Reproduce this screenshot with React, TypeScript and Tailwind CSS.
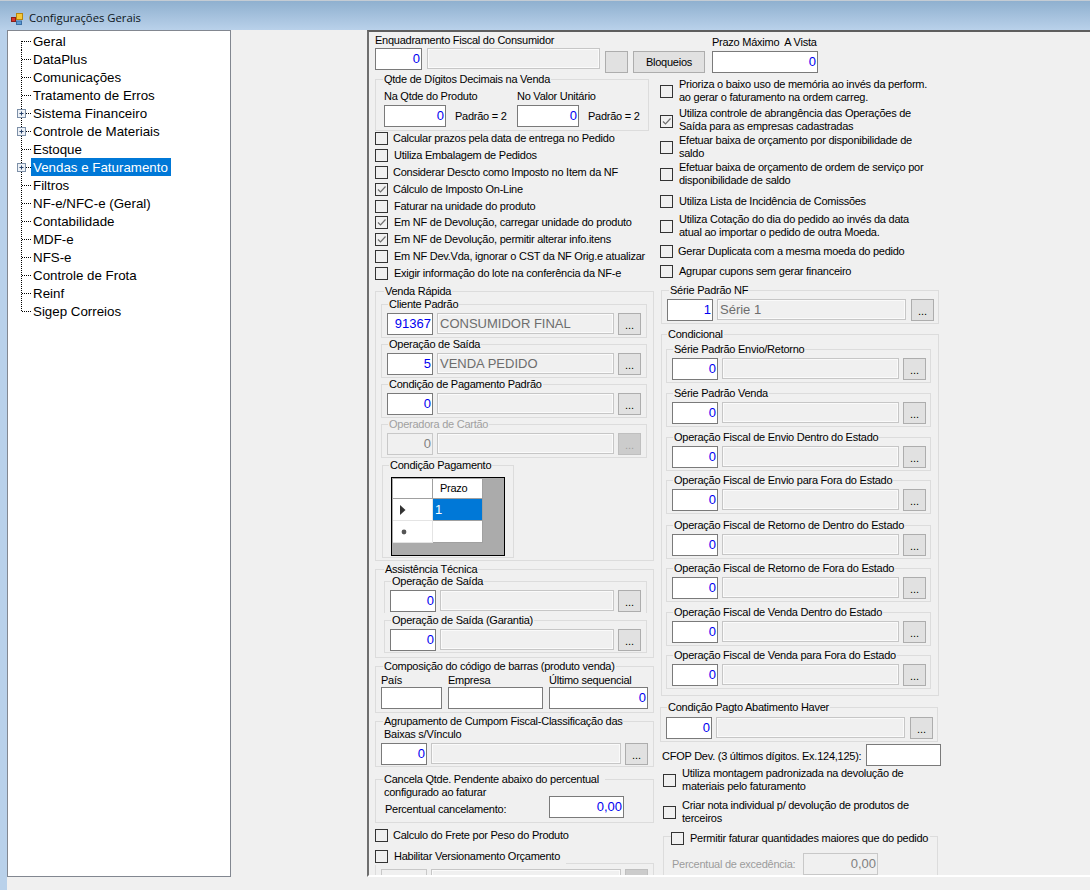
import React from "react";

type Kids = { children?: React.ReactNode };

const treeItems: [string, boolean][] = [
  ["Geral", false], ["DataPlus", false], ["Comunicações", false], ["Tratamento de Erros", false],
  ["Sistema Financeiro", true], ["Controle de Materiais", true], ["Estoque", false], ["Vendas e Faturamento", true],
  ["Filtros", false], ["NF-e/NFC-e (Geral)", false], ["Contabilidade", false], ["MDF-e", false],
  ["NFS-e", false], ["Controle de Frota", false], ["Reinf", false], ["Sigep Correios", false],
];

function TreeLines({ plus, first, last }: { plus: boolean; first: boolean; last: boolean }) {
  return (
    <svg width="23" height="18" className="shrink-0">
      <line x1="13.5" x2="13.5" y1={first ? 9 : 0} y2={last ? 9 : 18} stroke="#000" strokeDasharray="1 1" />
      <line x1="14" x2="23" y1="9.5" y2="9.5" stroke="#000" strokeDasharray="1 1" />
      {plus && (
        <g>
          <rect x="9.5" y="5.5" width="8" height="8" fill="#eef2f7" stroke="#7d90a8" />
          <path d="M11.5 9.5h4M13.5 7.5v4" stroke="#27426b" />
        </g>
      )}
    </svg>
  );
}

function Tree() {
  return (
    <div className="w-[224px] h-[847px] shrink-0 bg-white border border-[#828790] pt-[1px] text-[13.33px] tracking-normal text-black">
      {treeItems.map(([t, plus], i) => {
        const sel = t === "Vendas e Faturamento";
        return (
          <div key={t} className="flex items-center h-[18px]">
            <TreeLines plus={plus} first={i === 0} last={i === treeItems.length - 1} />
            <span className={sel ? "h-[18px] leading-[20px] pl-[2px] pr-[3px] bg-[#0078d7] text-white" : "h-[18px] leading-[20px] pl-[2px]"}>{t}</span>
          </div>
        );
      })}
    </div>
  );
}

function Num({ w, v, dis, cls }: { w: string; v?: string; dis?: boolean; cls?: string }) {
  return (
    <div
      className={`${w} ${cls ?? ""} h-[22px] shrink-0 border text-right pr-[1px] text-[13px] tracking-normal leading-[20px] ${
        dis ? "bg-[#f0f0f0] border-[#c8c8c8] text-[#808080]" : "bg-white border-[#7a7a7a] text-[#0000f0]"
      }`}
    >
      {v}
    </div>
  );
}

function Gray({ w, v }: { w: string; v?: string }) {
  return (
    <div className={`${w} h-[21px] shrink-0 border border-[#c6c6c6] shadow-[inset_0_0_0_1px_#fafafa] bg-[#f0f0f0] pl-[2px] text-[13px] tracking-normal leading-[20px] text-[#6d6d6d]`}>
      {v}
    </div>
  );
}

function Dots({ dis, cls }: { dis?: boolean; cls?: string }) {
  return (
    <div
      className={`w-[23px] h-[22px] shrink-0 border text-center text-[11px] tracking-normal leading-[22px] ${cls ?? ""} ${
        dis ? "bg-[#cccccc] border-[#bfbfbf] text-[#a0a0a0]" : "bg-[#e1e1e1] border-[#adadad] text-black"
      }`}
    >
      ...
    </div>
  );
}

function Lookup({ numW = "w-[46px]", grayW, v, t, dis, gap2 = "ml-[4px]" }: { numW?: string; grayW: string; v: string; t?: string; dis?: boolean; gap2?: string }) {
  return (
    <div className="flex items-start">
      <Num w={numW} v={v} dis={dis} />
      <div className="ml-[4px]"><Gray w={grayW} v={t} /></div>
      <Dots dis={dis} cls={gap2} />
    </div>
  );
}

function Group({ legend, cls, lcls, legendColor, children }: Kids & { legend?: React.ReactNode; cls: string; lcls?: string; legendColor?: string }) {
  return (
    <div className={`border border-[#dcdcdc] ${cls}`}>
      <div className={`-mt-[7px] h-[13px] leading-[13px] w-fit bg-[#f0f0f0] px-[1px] whitespace-pre ${lcls ?? "ml-[7px]"} ${legendColor ?? ""}`}>{legend}</div>
      {children}
    </div>
  );
}

function Box({ on }: { on?: boolean }) {
  return (
    <span className="w-[13px] h-[13px] shrink-0 border border-[#333333] block">
      {on && (
        <svg width="11" height="11" className="block">
          <path d="M2 5.5 4.5 8 9.5 2.5" fill="none" stroke="#6e6e6e" strokeWidth="1.2" />
        </svg>
      )}
    </span>
  );
}

function Check({ on, lines, h, gap = "gap-[6px]", cls, tcls }: { on?: boolean; lines: string[]; h: string; gap?: string; cls?: string; tcls?: string }) {
  return (
    <div className={`flex items-center ${gap} ${h} ${cls ?? ""}`}>
      <Box on={on} />
      <div className={`leading-[13px] whitespace-nowrap ${tcls ?? ""}`}>
        {lines.map((l) => <div key={l}>{l}</div>)}
      </div>
    </div>
  );
}

function Sub({ legend, cls, children }: Kids & { legend: string; cls: string }) {
  return (
    <Group legend={legend} cls={cls} lcls="ml-[6px]">
      <div className="mt-[2px] pl-[5px]">{children}</div>
    </Group>
  );
}

function GridTable() {
  const head = "w-[40px] border-r border-b border-[#a0a0a0] bg-white flex items-center";
  return (
    <div className="ml-[8px] mt-[5px] w-[114px] h-[79px] border border-black bg-[#ababab] pl-[1px] pt-[1px]">
      <div className="flex h-[20px]">
        <div className={head} />
        <div className="w-[50px] bg-white border-r border-b border-[#a0a0a0] pl-[7px] leading-[19px]">Prazo</div>
      </div>
      <div className="flex h-[22px]">
        <div className="w-[40px] border-r border-b border-[#e4e4e4] bg-white flex items-center pl-[7px]">
          <svg width="6" height="10"><path d="M0 0 5.5 5 0 10Z" fill="#333333" /></svg>
        </div>
        <div className="w-[50px] bg-[#0078d7] text-white border-r border-b border-[#a0a0a0] pl-[2px] text-[13px] tracking-normal leading-[21px]">1</div>
      </div>
      <div className="flex h-[22px]">
        <div className="w-[40px] border-r border-b border-[#e4e4e4] bg-white flex items-center pl-[8px]">
          <svg width="6" height="6"><circle cx="3" cy="3" r="2.4" fill="#555555" /></svg>
        </div>
        <div className="w-[50px] bg-white border-r border-b border-[#a0a0a0]" />
      </div>
    </div>
  );
}

function LeftColumn() {
  const left: [boolean, string, string][] = [
    [false, "Calcular prazos pela data de entrega no Pedido", "gap-[5px]"],
    [false, "Utiliza Embalagem de Pedidos", "gap-[6px]"],
    [false, "Considerar Descto como Imposto no Item da NF", "gap-[5px]"],
    [true, "Cálculo de Imposto On-Line", "gap-[5px]"],
    [false, "Faturar na unidade do produto", "gap-[6px]"],
    [true, "Em NF de Devolução, carregar unidade do produto", "gap-[6px]"],
    [true, "Em NF de Devolução, permitir alterar info.itens", "gap-[6px]"],
    [false, "Em NF Dev.Vda, ignorar o CST da NF Orig.e atualizar", "gap-[6px]"],
    [false, "Exigir informação do lote na conferência da NF-e", "gap-[6px]"],
  ];
  return (
    <div className="w-[285px] shrink-0">
      <Group legend="Qtde de Dígitos Decimais na Venda" cls="w-[274px] h-[52px]">
        <div className="flex pl-[8px] pt-[3px]">
          <div className="w-[133px]">
            <div className="h-[16px] leading-[15px]">Na Qtde do Produto</div>
            <div className="flex items-center">
              <Num w="w-[62px]" v="0" />
              <span className="ml-[9px]">Padrão = 2</span>
            </div>
          </div>
          <div>
            <div className="h-[16px] leading-[15px]">No Valor Unitário</div>
            <div className="flex items-center">
              <Num w="w-[62px]" v="0" />
              <span className="ml-[9px]">Padrão = 2</span>
            </div>
          </div>
        </div>
      </Group>

      <div className="-mt-[1px]">
        {left.map(([on, t, g]) => <Check key={t} on={on} lines={[t]} h="h-[16.9px]" gap={g} />)}
      </div>

      <Group legend="Venda Rápida" cls="mt-[9px] w-[279px] h-[270px]" lcls="ml-[8px]">
        <div className="ml-[5px] mt-[6px] flex flex-col gap-[6px]">
          <Sub legend="Cliente Padrão" cls="w-[266px] h-[34px]"><Lookup grayW="w-[177px]" v="91367" t="CONSUMIDOR FINAL" /></Sub>
          <Sub legend="Operação de Saída" cls="w-[266px] h-[34px]"><Lookup grayW="w-[177px]" v="5" t="VENDA PEDIDO" /></Sub>
          <Sub legend="Condição de Pagamento Padrão" cls="w-[266px] h-[34px]"><Lookup grayW="w-[177px]" v="0" /></Sub>
          <Group legend="Operadora de Cartão" cls="w-[266px] h-[34px]" lcls="ml-[6px]" legendColor="text-[#a0a0a0]">
            <div className="mt-[2px] pl-[5px]"><Lookup grayW="w-[177px]" v="0" dis /></div>
          </Group>
        </div>
        <Group legend="Condição Pagamento" cls="ml-[6px] mt-[7px] w-[132px] h-[93px]" lcls="ml-[6px]">
          <GridTable />
        </Group>
      </Group>

      <Group legend="Assistência Técnica" cls="mt-[8px] w-[279px] h-[89px]" lcls="ml-[8px]">
        <div className="ml-[8px] mt-[5px]">
          <div className="w-[263px] h-[32px] mb-[7px] border border-b-0 border-[#dcdcdc]">
            <div className="-mt-[7px] ml-[6px] h-[13px] leading-[13px] w-fit bg-[#f0f0f0] px-[1px]">Operação de Saída</div>
            <div className="mt-[2px] pl-[5px]"><Lookup grayW="w-[174px]" v="0" /></div>
          </div>
          <Sub legend="Operação de Saída (Garantia)" cls="w-[263px] h-[33px]"><Lookup grayW="w-[174px]" v="0" /></Sub>
        </div>
      </Group>

      <Group legend="Composição do código de barras (produto venda)" cls="mt-[8px] w-[279px] h-[47px]">
        <div className="flex pl-[5px] gap-[6px]">
          <div><div className="h-[14px] leading-[14px]">País</div><Num w="w-[61px]" /></div>
          <div><div className="h-[14px] leading-[14px]">Empresa</div><Num w="w-[95px]" /></div>
          <div><div className="h-[14px] leading-[14px]">Último sequencial</div><Num w="w-[99px]" v="0" /></div>
        </div>
      </Group>

      <Group
        legend={<>Agrupamento de Cumpom Fiscal-Classificação das{"\n"}Baixas s/Vínculo</>}
        cls="mt-[8px] w-[279px] h-[46px]"
        lcls="ml-[7px] !h-[26px] !w-[239px]"
      >
        <div className="mt-[2px] pl-[5px]"><Lookup grayW="w-[190px]" v="0" /></div>
      </Group>

      <Group
        legend={<>Cancela Qtde. Pendente abaixo do percentual{"\n"}configurado ao faturar</>}
        cls="mt-[12px] w-[279px] h-[44px]"
        lcls="ml-[7px] !h-[26px] !w-[222px]"
      >
        <div className="-mt-[3px] pl-[9px] flex items-start">
          <div className="w-[164px] mt-[7px] leading-[13px]">Percentual cancelamento:</div>
          <Num w="w-[75px]" v="0,00" />
        </div>
      </Group>

      <Check lines={["Calculo do Frete por Peso do Produto"]} h="h-[17px] mt-[4px]" gap="gap-[5px]" />

      <div className="mt-[19px] w-[279px] h-[40px] border border-[#dcdcdc]">
        <Check lines={["Habilitar Versionamento Orçamento"]} h="h-[17px] w-[191px] -mt-[16px] -ml-[1px] bg-[#f0f0f0]" gap="gap-[6px]" />
        <div className="flex items-start pl-[5px] mt-[4px]">
          <Lookup grayW="w-[190px]" v="0" dis />
        </div>
      </div>
    </div>
  );
}

function RightColumn() {
  const conds: [string, string][] = [
    ["Série Padrão Envio/Retorno", "mt-[8px]"],
    ["Série Padrão Venda", "mt-[10px]"],
    ["Operação Fiscal de Envio Dentro do Estado", "mt-[10px]"],
    ["Operação Fiscal de Envio para Fora do Estado", "mt-[9px]"],
    ["Operação Fiscal de Retorno de Dentro do Estado", "mt-[11px]"],
    ["Operação Fiscal de Retorno de Fora do Estado", "mt-[9px]"],
    ["Operação Fiscal de Venda Dentro do Estado", "mt-[10px]"],
    ["Operação Fiscal de Venda para Fora do Estado", "mt-[9px]"],
  ];
  return (
    <div className="w-[300px] shrink-0">
      <Check lines={["Prioriza o baixo uso de memória ao invés da perform.", "ao gerar o faturamento na ordem carreg."]} h="h-[26px] -mt-[1px]" />
      <Check on lines={["Utiliza controle de abrangência das Operações de", "Saída para as empresas cadastradas"]} h="h-[34px]" tcls="-mt-[3px]" />
      <Check lines={["Efetuar baixa de orçamento por disponibilidade de", "saldo"]} h="h-[18px]" />
      <Check lines={["Efetuar baixa de orçamento de ordem de serviço por", "disponibilidade de saldo"]} h="h-[36px]" />
      <Check lines={["Utiliza Lista de Incidência de Comissões"]} h="h-[18px]" />
      <Check lines={["Utiliza Cotação do dia do pedido ao invés da data", "atual ao importar o pedido de outra Moeda."]} h="h-[32px]" />
      <Check lines={["Gerar Duplicata com a mesma moeda do pedido"]} h="h-[18px]" gap="gap-[5px]" />
      <Check lines={["Agrupar cupons sem gerar financeiro"]} h="h-[22px]" />

      <Group legend="Série Padrão NF" cls="mt-[8px] ml-[1px] w-[278px] h-[34px]">
        <div className="mt-[2px] pl-[5px]"><Lookup grayW="w-[189px]" gap2="ml-[5px]" v="1" t="Série 1" /></div>
      </Group>

      <Group legend="Condicional" cls="mt-[10px] ml-[1px] w-[278px] h-[362px]" lcls="ml-[5px]">
        <div className="ml-[4px]">
          {conds.map(([l, m]) => (
            <Sub key={l} legend={l} cls={`${m} w-[265px] h-[34px]`}><Lookup grayW="w-[177px]" v="0" /></Sub>
          ))}
        </div>
      </Group>

      <Group legend="Condição Pagto Abatimento Haver" cls="mt-[11px] w-[278px] h-[35px]" lcls="ml-[6px]">
        <div className="mt-[3px] pl-[5px]"><Lookup grayW="w-[189px]" gap2="ml-[5px]" v="0" /></div>
      </Group>

      <div className="mt-[2px] ml-[2px] flex items-center h-[22px]">
        <span className="w-[204px] pt-[2px] whitespace-nowrap">CFOP Dev. (3 últimos dígitos. Ex.124,125):</span>
        <Num w="w-[75px]" />
      </div>

      <Check lines={["Utiliza montagem padronizada na devolução de", "materiais pelo faturamento"]} h="h-[28px]" cls="ml-[3px]" />
      <Check lines={["Criar nota individual p/ devolução de produtos de", "terceiros"]} h="h-[36px]" cls="ml-[3px]" />

      <div className="mt-[6px] ml-[3px] w-[275px] h-[60px] border border-[#dcdcdc]">
        <div className="-mt-[7px] ml-[7px] w-fit bg-[#f0f0f0] pr-[2px]">
          <Check lines={["Permitir faturar quantidades maiores que do pedido"]} h="h-[17px]" />
        </div>
        <div className="mt-[6px] pl-[8px] flex items-center">
          <span className="w-[131px] text-[#9c9c9c] whitespace-nowrap">Percentual de excedência:</span>
          <Num w="w-[75px]" v="0,00" dis />
        </div>
      </div>
    </div>
  );
}

export default function App() {
  return (
    <div className="w-[1090px] h-[890px] overflow-hidden flex flex-col bg-[#f0f0f0] text-black text-[11px] tracking-[-0.25px] font-['Liberation_Sans',Arial,sans-serif]">
      <div className="h-[30px] shrink-0 border-t border-[#c4ccd4] bg-gradient-to-b from-[#8fb0cf] to-[#b9d1ea] flex items-center pl-[11px] pt-[6px] gap-[6px]">
        <svg width="12" height="12" className="shrink-0">
          <rect x="0.5" y="4.5" width="4" height="4" fill="#d9342b" stroke="#8a1f1a" />
          <rect x="5.5" y="0.5" width="6" height="6" fill="#f4c83a" stroke="#b8860b" />
          <rect x="5.5" y="8" width="5" height="3.5" fill="#5b9bd5" stroke="#3a6ea5" />
        </svg>
        <span className="font-['Open_Sans',sans-serif] text-[11.3px] tracking-normal text-[#0c1520]">Configurações Gerais</span>
      </div>
      <div className="flex border-l-[7px] border-[#b9d1ea] flex-1 items-start">
        <Tree />
        <div className="ml-[136px] w-[723px] h-[847px] overflow-hidden border-l-2 border-t-2 border-b-2 border-l-[#6e6e6e] border-t-[#5e5e5e] border-b-white pl-[6px]">
          <div className="flex h-[47px] pt-[1px]">
            <div className="w-[258px] shrink-0">
              <div className="h-[15px] leading-[15px]">Enquadramento Fiscal do Consumidor</div>
              <div className="flex items-start">
                <Num w="w-[47px]" v="0" />
                <div className="ml-[5px]"><Gray w="w-[173px]" /></div>
                <div className="ml-[5px] mt-[3px] w-[23px] h-[22px] bg-[#e1e1e1] border border-[#adadad]" />
              </div>
            </div>
            <div className="mt-[18px] w-[72px] h-[22px] bg-[#e1e1e1] border border-[#adadad] text-center leading-[20px] shrink-0">Bloqueios</div>
            <div className="ml-[7px]">
              <div className="mt-[3px] h-[15px] leading-[13px] whitespace-pre">Prazo Máximo  A Vista</div>
              <Num w="w-[106px]" v="0" />
            </div>
          </div>
          <div className="flex">
            <LeftColumn />
            <RightColumn />
          </div>
        </div>
      </div>
    </div>
  );
}
